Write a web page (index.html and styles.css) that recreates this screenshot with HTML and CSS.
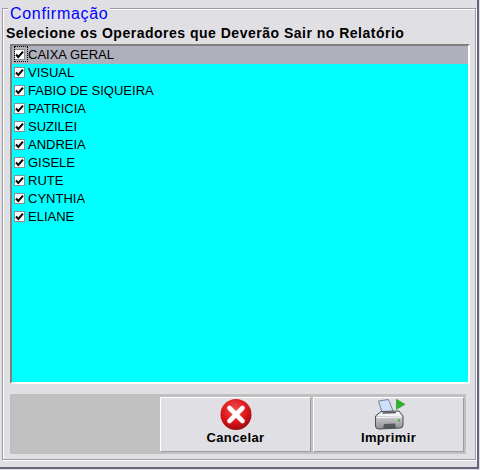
FILE: index.html
```html
<!DOCTYPE html>
<html lang="pt-BR">
<head>
    <meta charset="UTF-8">
    <title>Confirmação</title>
    <link rel="stylesheet" href="styles.css">
</head>
<body>
    <div class="window">
        <div class="group">
            <div class="group-title">Confirmação</div>
            <div class="subtitle">Selecione os Operadores que Deverão Sair no Relatório</div>

            <div class="list">
                <label class="row row-selected"><span class="focus"><span class="check"><svg viewBox="0 0 9 9"><path d="M1 4.5 L3.3 7 L8 1.6" /></svg></span></span>CAIXA GERAL</label>
                <label class="row"><span class="check"><svg viewBox="0 0 9 9"><path d="M1 4.5 L3.3 7 L8 1.6" /></svg></span>VISUAL</label>
                <label class="row"><span class="check"><svg viewBox="0 0 9 9"><path d="M1 4.5 L3.3 7 L8 1.6" /></svg></span>FABIO DE SIQUEIRA</label>
                <label class="row"><span class="check"><svg viewBox="0 0 9 9"><path d="M1 4.5 L3.3 7 L8 1.6" /></svg></span>PATRICIA</label>
                <label class="row"><span class="check"><svg viewBox="0 0 9 9"><path d="M1 4.5 L3.3 7 L8 1.6" /></svg></span>SUZILEI</label>
                <label class="row"><span class="check"><svg viewBox="0 0 9 9"><path d="M1 4.5 L3.3 7 L8 1.6" /></svg></span>ANDREIA</label>
                <label class="row"><span class="check"><svg viewBox="0 0 9 9"><path d="M1 4.5 L3.3 7 L8 1.6" /></svg></span>GISELE</label>
                <label class="row"><span class="check"><svg viewBox="0 0 9 9"><path d="M1 4.5 L3.3 7 L8 1.6" /></svg></span>RUTE</label>
                <label class="row"><span class="check"><svg viewBox="0 0 9 9"><path d="M1 4.5 L3.3 7 L8 1.6" /></svg></span>CYNTHIA</label>
                <label class="row"><span class="check"><svg viewBox="0 0 9 9"><path d="M1 4.5 L3.3 7 L8 1.6" /></svg></span>ELIANE</label>
            </div>

            <div class="actions">
                <button class="btn">
                    <svg class="btn-icon" width="34" height="32" viewBox="0 0 34 32">
                        <defs>
                            <radialGradient id="red" cx="0.45" cy="0.35" r="0.7">
                                <stop offset="0" stop-color="#f4504f" />
                                <stop offset="0.6" stop-color="#dc1518" />
                                <stop offset="1" stop-color="#8e0a0c" />
                            </radialGradient>
                        </defs>
                        <circle cx="17" cy="16.5" r="15.5" fill="url(#red)" />
                        <path d="M10.5 10 L23.5 23 M23.5 10 L10.5 23" stroke="#fff" stroke-width="4.6" stroke-linecap="round" />
                    </svg>
                    <span>Cancelar</span>
                </button>
                <button class="btn">
                    <svg class="btn-icon" width="34" height="32" viewBox="0 0 34 32">
                        <defs>
                            <linearGradient id="front" x1="0" y1="0" x2="0" y2="1">
                                <stop offset="0" stop-color="#e4e5e6" />
                                <stop offset="1" stop-color="#8d9093" />
                            </linearGradient>
                        </defs>
                        <path d="M6.5 3 L16.5 1.5 L21 13 L10 14 Z" fill="#cfe0fb" stroke="#78849c" />
                        <path d="M24.5 1.3 L32.8 6.3 L24.5 11.3 Z" fill="#2fb52a" stroke="#1f8a1f" stroke-width="0.6" />
                        <path d="M3.5 18 L9 13.5 L27 13 L31 18 L31 27 Q31 30 28 30 L7 31 Q3.5 31 3.5 28 Z" fill="url(#front)" stroke="#4c4f52" />
                        <path d="M5 18 L10 14.5 L26.5 14 L29.5 18 Z" fill="#f4f5f5" />
                        <path d="M10.5 15 L24 14.5" stroke="#55585c" stroke-width="1.4" />
                        <path d="M5 19.5 L30 19" stroke="#fff" />
                        <path d="M12 26 L23 25.5 L24 30 L11 30.5 Z" fill="#55585c" />
                        <rect x="26" y="21.5" width="2" height="2" fill="#36b030" />
                    </svg>
                    <span>Imprimir</span>
                </button>
            </div>
        </div>
    </div>
</body>
</html>
```

FILE: styles.css
```css
html, body {
    margin: 0;
    height: 100%;
}
body {
    font-family: "Liberation Sans", Arial, sans-serif;
    background-color: #e0dfe3;
    overflow: hidden;
}
.window {
    box-sizing: border-box;
    width: 479px;
    height: 469px;
    padding: 8px 1px 7px 2px;
    border-right: 2px solid #64647c;
    border-bottom: 2px solid #64647c;
}
.group {
    box-sizing: border-box;
    height: 100%;
    padding: 0 5px 0 3px;
    border: 1px solid #9d9ca1;
    box-shadow: 1px 1px 0 #fff, inset 1px 1px 0 #fff;
}
.group-title {
    width: fit-content;
    margin: -4px 0 0 2px;
    padding: 0 2px;
    background-color: #e0dfe3;
    font-size: 16px;
    line-height: 18px;
    letter-spacing: 0.7px;
    color: #0000ff;
}
.subtitle {
    margin: 2px 0 2px 0;
    font-size: 14px;
    font-weight: bold;
    line-height: 17px;
    letter-spacing: 0.5px;
    color: #000;
    white-space: nowrap;
}
.list {
    box-sizing: border-box;
    height: 340px;
    margin-left: 4px;
    background-color: #00ffff;
    border-top: 2px solid #808080;
    border-left: 2px solid #808080;
    border-right: 2px solid #fff;
    border-bottom: 2px solid #fff;
}
.row {
    box-sizing: border-box;
    display: flex;
    align-items: center;
    height: 18px;
    padding: 0 0 2px 2px;
    font-size: 13px;
    color: #000;
}
.row-selected {
    background-color: #aeb0bc;
}
.check {
    box-sizing: border-box;
    display: flex;
    flex: none;
    width: 11px;
    height: 11px;
    margin-right: 3px;
    background-color: #fff;
    border: 1px solid #8e8f8f;
}
.check svg {
    width: 9px;
    height: 9px;
}
.check path {
    fill: none;
    stroke: #000;
    stroke-width: 2;
}
.focus {
    display: flex;
    flex: none;
    align-items: center;
    height: 16px;
    outline: 1px dotted #000;
    outline-offset: -1px;
}
.actions {
    display: flex;
    justify-content: flex-end;
    gap: 2px;
    height: 60px;
    box-sizing: border-box;
    margin: 10px 4px 0 4px;
    padding: 3px 2px 2px 0;
    background-color: #c0c0c0;
}
.btn {
    display: flex;
    flex-direction: column;
    align-items: center;
    width: 151px;
    padding: 0;
    background-color: #e0dfe3;
    border: 1px solid;
    border-color: #fff #9d9ca1 #9d9ca1 #fff;
    font-family: "Liberation Sans", Arial, sans-serif;
    font-size: 13px;
    font-weight: bold;
    line-height: 15px;
    letter-spacing: 0.4px;
    color: #000;
}
.btn-icon {
    display: block;
}
```
